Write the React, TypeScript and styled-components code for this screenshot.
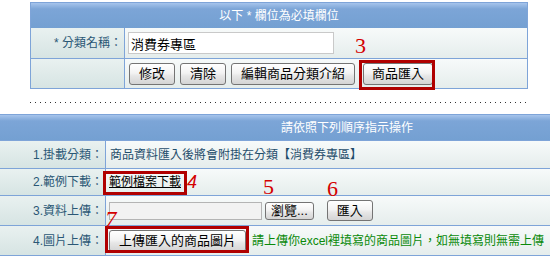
import React from "react";
import styled, { createGlobalStyle } from "styled-components";

const Global = createGlobalStyle`
  html, body { margin: 0; padding: 0; background: #fff; }
  body { font-family: "Liberation Sans", "Noto Sans CJK TC", sans-serif; }
  * { box-sizing: border-box; }
`;

const LINE = "#7ea4d8";

const Page = styled.div`
  position: relative;
  width: 550px;
  height: 259px;
  overflow: hidden;
  padding-top: 2px;
`;

const Panel = styled.div<{ $inset: number; $width: string; $sides: boolean }>`
  margin-left: ${(p) => p.$inset}px;
  width: ${(p) => p.$width};
  border-top: 1px solid ${LINE};
  border-bottom: 1px solid ${LINE};
  border-left: ${(p) => (p.$sides ? `1px solid ${LINE}` : "none")};
  border-right: ${(p) => (p.$sides ? `1px solid ${LINE}` : "none")};
`;

const Head = styled.div<{ $h: number; $pad: number; $center: boolean; $line: boolean }>`
  height: ${(p) => p.$h}px;
  display: flex;
  align-items: center;
  justify-content: ${(p) => (p.$center ? "center" : "flex-start")};
  padding-left: ${(p) => p.$pad}px;
  background: linear-gradient(#a6c4ec 0px, #7ca5d7 6px, #74a0d2 100%);
  border-bottom: ${(p) => (p.$line ? `1px solid ${LINE}` : "none")};
  color: #fff;
  font-size: 12px;
  line-height: 1;
  white-space: pre;
`;

const Row = styled.div<{ $h: number; $label: number; $last?: boolean }>`
  display: grid;
  grid-template-columns: ${(p) => p.$label}px 1fr;
  height: ${(p) => p.$h}px;
  border-bottom: ${(p) => (p.$last ? "none" : `1px solid ${LINE}`)};
  background: linear-gradient(#f7fafa, #e5edec);
`;

const Label = styled.div<{ $pr: number }>`
  display: flex;
  align-items: center;
  justify-content: flex-end;
  padding-right: ${(p) => p.$pr}px;
  border-right: 1px solid ${LINE};
  background: linear-gradient(#e9f1f0, #d6e4e3);
  color: #2a5775;
  font-size: 12px;
  line-height: 1;
  white-space: pre;
`;

const Value = styled.div<{ $pl: number; $gap?: number }>`
  display: flex;
  align-items: center;
  padding-left: ${(p) => p.$pl}px;
  gap: ${(p) => p.$gap ?? 0}px;
  color: #1f4d6b;
  font-size: 12px;
  line-height: 1;
  white-space: nowrap;
`;

const TextField = styled.input<{ $w: number; $h: number; $muted?: boolean }>`
  width: ${(p) => p.$w}px;
  height: ${(p) => p.$h}px;
  margin: 0;
  padding: 0 2px;
  border: 1px solid ${(p) => (p.$muted ? "#b4b4b4" : "#c9c9c9")};
  background: ${(p) => (p.$muted ? "#f2f2f2" : "#fff")};
  font: 13px/1 "Liberation Sans", "Noto Sans CJK TC", sans-serif;
  color: #000;
  outline: none;
`;

const Btn = styled.button<{ $h: number; $px: number; $ml?: number }>`
  height: ${(p) => p.$h}px;
  margin: 0 0 0 ${(p) => p.$ml ?? 0}px;
  padding: 0 ${(p) => p.$px}px;
  border: 1px solid #747474;
  border-radius: 3px;
  background: linear-gradient(#ffffff, #f3f3f3 45%, #e6e6e6 60%, #d4d4d4);
  color: #000;
  font: 13px/1 "Liberation Sans", "Noto Sans CJK TC", sans-serif;
  white-space: nowrap;
  cursor: pointer;
`;

const Link = styled.a`
  color: #000;
  text-decoration: underline;
  font-size: 12px;
`;

const Note = styled.span`
  margin-left: 6px;
  color: #0a8a0a;
  font-size: 12px;
`;

const Dotted = styled.div`
  margin: 13px 0 11px 30px;
  width: 498px;
  height: 1px;
  background-image: linear-gradient(to right, #333 1px, transparent 1px);
  background-size: 5px 1px;
`;

const Mark = styled.div<{ $x: number; $y: number; $w: number; $h: number }>`
  position: absolute;
  left: ${(p) => p.$x}px;
  top: ${(p) => p.$y}px;
  width: ${(p) => p.$w}px;
  height: ${(p) => p.$h}px;
  border: 3px solid #b00000;
  pointer-events: none;
`;

const Num = styled.span<{ $x: number; $y: number; $size: number; $italic?: boolean; $sans?: boolean }>`
  position: absolute;
  left: ${(p) => p.$x}px;
  top: ${(p) => p.$y}px;
  font-family: ${(p) => (p.$sans ? '"Liberation Sans", sans-serif' : '"Liberation Serif", serif')};
  font-style: ${(p) => (p.$italic ? "italic" : "normal")};
  font-size: ${(p) => p.$size}px;
  line-height: 1;
  color: #d40000;
`;

export default function App() {
  return (
    <>
      <Global />
      <Page>
        <Panel $inset={30} $width="498px" $sides>
          <Head $h={25} $pad={0} $center $line={false}>
            {"以下 * 欄位為必填欄位"}
          </Head>
          <Row $h={31} $label={94}>
            <Label $pr={2}>{"* 分類名稱："}</Label>
            <Value $pl={3}>
              <TextField $w={206} $h={22} defaultValue="消費券專區" />
            </Value>
          </Row>
          <Row $h={29} $label={94} $last>
            <Label $pr={2} />
            <Value $pl={4} $gap={5}>
              <Btn $h={22} $px={9}>修改</Btn>
              <Btn $h={22} $px={9}>清除</Btn>
              <Btn $h={22} $px={9}>編輯商品分類介紹</Btn>
              <Btn $h={22} $px={8} $ml={3}>商品匯入</Btn>
            </Value>
          </Row>
        </Panel>

        <Dotted />

        <Panel $inset={0} $width="100%" $sides={false}>
          <Head $h={26} $pad={281} $center={false} $line>
            請依照下列順序指示操作
          </Head>
          <Row $h={28} $label={106}>
            <Label $pr={2}>1.掛載分類：</Label>
            <Value $pl={4}>商品資料匯入後將會附掛在分類【消費券專區】</Value>
          </Row>
          <Row $h={27} $label={106}>
            <Label $pr={2}>2.範例下載：</Label>
            <Value $pl={3}>
              <Link href="#">範例檔案下載</Link>
            </Value>
          </Row>
          <Row $h={30} $label={106}>
            <Label $pr={2}>3.資料上傳：</Label>
            <Value $pl={3}>
              <TextField $w={153} $h={18} $muted readOnly />
              <Btn $h={18} $px={5} $ml={3}>瀏覽...</Btn>
              <Btn $h={21} $px={9} $ml={13}>匯入</Btn>
            </Value>
          </Row>
          <Row $h={29} $label={106} $last>
            <Label $pr={2}>4.圖片上傳：</Label>
            <Value $pl={3}>
              <Btn $h={22} $px={9}>上傳匯入的商品圖片</Btn>
              <Note>請上傳你excel裡填寫的商品圖片，如無填寫則無需上傳</Note>
            </Value>
          </Row>
        </Panel>

        <Mark $x={359} $y={60} $w={76} $h={30} />
        <Mark $x={103} $y={171} $w={84} $h={24} />
        <Mark $x={105} $y={226} $w={144} $h={27} />

        <Num $x={355} $y={35} $size={22}>3</Num>
        <Num $x={187} $y={173} $size={18} $italic $sans>4</Num>
        <Num $x={263} $y={176} $size={22}>5</Num>
        <Num $x={327} $y={178} $size={22}>6</Num>
        <Num $x={105} $y={208} $size={23} $italic>7</Num>
      </Page>
    </>
  );
}
